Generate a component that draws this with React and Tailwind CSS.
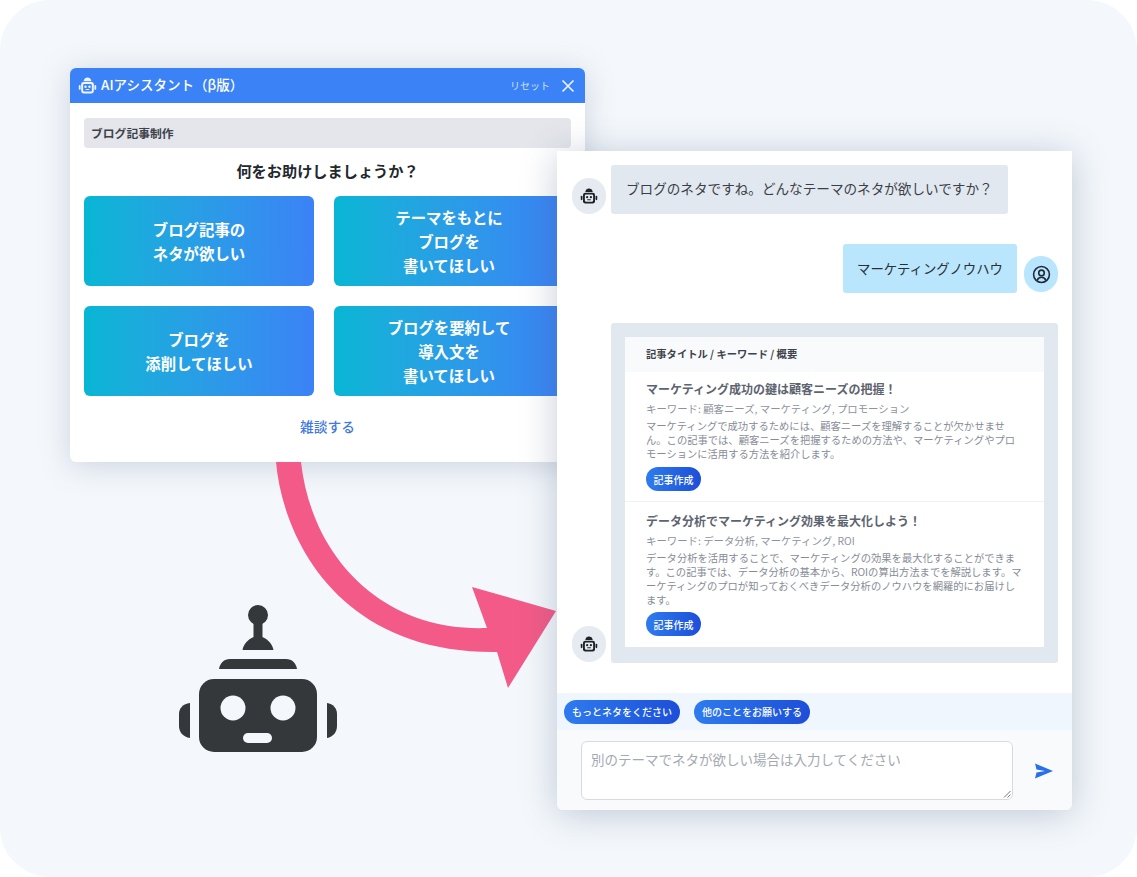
import React from "react";

const font = '"Noto Sans CJK JP", "Noto Sans", sans-serif';

function Robot({ className, fill = "#35383b", eye = "#fff" }) {
  return (
    <svg viewBox="176 603 164 151" className={className} aria-hidden="true">
      <circle cx="258" cy="615" r="10" fill={fill} />
      <path d="M253.500 620h9v17c5 2 10 7 11 13h-31c1-6 6-11 11-13z" fill={fill} />
      <path d="M219 669c1-6 5-10 11-10h56c6 0 10 4 11 10z" fill={fill} />
      <rect x="199" y="679" width="118" height="73" rx="15" fill={fill} />
      <circle cx="233" cy="708" r="12.5" fill={eye} />
      <circle cx="283" cy="708" r="12.5" fill={eye} />
      <rect x="243" y="733" width="29" height="10" rx="5" fill={eye} />
      <path d="M190 703v35c-7-1-11-6-11-12v-12c0-6 4-10 11-11z" fill={fill} />
      <path d="M327 703v35c6-1 10-6 10-12v-12c0-6-4-10-10-11z" fill={fill} />
    </svg>
  );
}

function SmallRobot({ className, fill, face }) {
  return (
    <svg viewBox="0 0 24 24" className={className} aria-hidden="true">
      <path d="M7 6.500C7.500 3.500 9.500 2 12 2s4.500 1.500 5 4.500z" fill={fill} />
      <rect x="4" y="7.500" width="16" height="14.500" rx="3" fill={fill} />
      <rect x="1" y="11.500" width="2.300" height="6" rx="1.100" fill={fill} />
      <rect x="20.700" y="11.500" width="2.300" height="6" rx="1.100" fill={fill} />
      <rect x="6.500" y="10" width="11" height="9.500" rx="1.500" fill={face} />
      <circle cx="9.500" cy="13.500" r="1.500" fill={fill} />
      <circle cx="14.500" cy="13.500" r="1.500" fill={fill} />
      <rect x="9.500" y="16.300" width="5" height="1.500" rx="0.700" fill={fill} />
    </svg>
  );
}

function ActionCard({ lines }) {
  return (
    <div className="h-[90px] rounded-md bg-gradient-to-r from-[#06b6d4] to-[#3b82f6] flex flex-col items-center justify-center text-white text-[15.4px] font-bold leading-[24px] text-center">
      {lines.map((l) => (
        <span key={l}>{l}</span>
      ))}
    </div>
  );
}

function BotAvatar() {
  return (
    <div className="w-[34px] h-[36px] rounded-full bg-[#e5ebf1] flex items-center justify-center shrink-0">
      <SmallRobot className="w-[18px] h-[18px]" fill="#1f2328" face="#e5ebf1" />
    </div>
  );
}

function Chip({ children, className = "" }) {
  return (
    <span className={`inline-flex items-center justify-center h-[24px] rounded-full bg-gradient-to-r from-[#2f7bee] to-[#1d4ed8] text-white text-[10px] font-medium whitespace-nowrap ${className}`}>
      {children}
    </span>
  );
}

function Article({ title, keywords, lines, className, chipClass }) {
  return (
    <div className={`px-[21px] ${className}`}>
      <div className="text-[12px] font-bold leading-[18px] text-[#5d6470] whitespace-nowrap">{title}</div>
      <div className="mt-[4px] text-[10.4px] leading-[14px] text-[#8d939d] whitespace-nowrap">{keywords}</div>
      <div className="mt-[3px] text-[10.3px] leading-[14px] text-[#868c96]">
        {lines.map((l) => (
          <div key={l} className="whitespace-nowrap">{l}</div>
        ))}
      </div>
      <Chip className={`w-[55px] ${chipClass}`}>記事作成</Chip>
    </div>
  );
}

export default function App() {
  return (
    <div className="relative w-[1137px] h-[877px] overflow-hidden bg-white" style={{ fontFamily: font }}>
      <div className="absolute inset-0 rounded-[50px] bg-[#f4f8fc]" />

      {/* Left window */}
      <div className="absolute left-[70px] top-[68px] w-[515px] h-[394px] rounded-md bg-white shadow-[0_4px_30px_rgba(90,105,135,0.25)] overflow-hidden">
        <div className="h-[35px] bg-[#3b82f6] flex items-center pl-[8px] pr-[10px] text-white">
          <SmallRobot className="w-[19px] h-[19px] shrink-0" fill="#eef4ff" face="#3b82f6" />
          <span className="ml-[4px] -mt-[2px] text-[13.5px] font-medium">AIアシスタント（β版）</span>
          <span className="ml-auto text-[10px] text-[#cfe0fc]">リセット</span>
          <svg viewBox="0 0 14 14" className="ml-[11px] w-[14px] h-[14px]" fill="none" stroke="#eaf2ff" strokeWidth="1.7" aria-hidden="true">
            <path d="M1.500 1.500l11 11M12.500 1.500l-11 11" />
          </svg>
        </div>
        <div className="px-[14px] pt-[15px]">
          <div className="h-[30px] rounded-sm bg-[#e4e6eb] flex items-center px-[7px] text-[11.8px] font-bold text-[#3e434b]">
            ブログ記事制作
          </div>
          <div className="mt-[11px] text-center text-[15.2px] leading-[22px] font-bold text-[#23272e]">
            何をお助けしましょうか？
          </div>
          <div className="mt-[15px] grid grid-cols-[230px_230px] gap-x-[20px] gap-y-[20px]">
            <ActionCard lines={["ブログ記事の", "ネタが欲しい"]} />
            <ActionCard lines={["テーマをもとに", "ブログを", "書いてほしい"]} />
            <ActionCard lines={["ブログを", "添削してほしい"]} />
            <ActionCard lines={["ブログを要約して", "導入文を", "書いてほしい"]} />
          </div>
          <div className="mt-[20px] text-center text-[13.7px] leading-[20px] font-medium text-[#3f78e0]">雑談する</div>
        </div>
      </div>

      {/* Curved arrow */}
      <svg viewBox="0 0 1137 877" className="absolute inset-0 w-[1137px] h-[877px]" aria-hidden="true">
        <path
          d="M276 462C283 540 340 654 497 652L508 688L556 611L472 587L487 628C385 632 312 560 301 462Z"
          fill="#f45a87"
        />
      </svg>

      {/* Big robot */}
      <Robot className="absolute left-[176px] top-[603px] w-[164px] h-[151px]" eye="#f4f8fc" />

      {/* Right window */}
      <div className="absolute left-[557px] top-[151px] w-[515px] h-[659px] rounded-b-md bg-white shadow-[0_4px_36px_rgba(80,95,130,0.32)] flex flex-col overflow-hidden">
        <div className="h-[542px] relative">
          <div className="flex items-start pl-[15px] pt-[14px]">
            <div className="mt-[13px]"><BotAvatar /></div>
            <div className="ml-[5px] w-[397px] h-[49px] rounded-[3px] bg-[#e2e8f0] flex items-center pl-[15px] pb-[2px] text-[13.6px] text-[#3a3f47] whitespace-nowrap">
              ブログのネタですね。どんなテーマのネタが欲しいですか？
            </div>
          </div>
          <div className="flex items-start justify-end pr-[14px] mt-[30px]">
            <div className="w-[174px] h-[49px] rounded-[3px] bg-[#bae6fd] flex items-center justify-center pb-[1px] text-[13.4px] text-[#2a2f36] whitespace-nowrap">
              マーケティングノウハウ
            </div>
            <div className="ml-[7px] mt-[12px] w-[34px] h-[36px] rounded-full bg-[#bae6fd] flex items-center justify-center">
              <svg viewBox="0 0 24 24" className="w-[19px] h-[19px]" fill="none" stroke="#1f2937" strokeWidth="2" aria-hidden="true">
                <circle cx="12" cy="12" r="10" />
                <circle cx="12" cy="10" r="3.500" />
                <path d="M6.500 19.500c1-3 3-4 5.500-4s4.500 1 5.500 4" />
              </svg>
            </div>
          </div>
          <div className="flex items-end pl-[15px] pr-[14px] mt-[30px]">
            <BotAvatar />
            <div className="ml-[5px] -mb-[1px] w-[447px] h-[340px] rounded-[3px] bg-[#e2e8f0] p-[14px] pb-[16px]">
              <div className="w-[419px] h-[310px] bg-white">
                <div className="h-[35px] bg-[#f9fafb] flex items-center pb-[2px] px-[21px] text-[10.3px] font-bold text-[#3e434b]">
                  記事タイトル / キーワード / 概要
                </div>
                <Article
                  className="h-[130px] pt-[8px] border-b border-[#f0f1f3]"
                  chipClass="mt-[6px]"
                  title="マーケティング成功の鍵は顧客ニーズの把握！"
                  keywords="キーワード: 顧客ニーズ, マーケティング, プロモーション"
                  lines={[
                    "マーケティングで成功するためには、顧客ニーズを理解することが欠かせませ",
                    "ん。この記事では、顧客ニーズを把握するための方法や、マーケティングやプロ",
                    "モーションに活用する方法を紹介します。",
                  ]}
                />
                <Article
                  className="pt-[10px]"
                  chipClass="mt-[5px]"
                  title="データ分析でマーケティング効果を最大化しよう！"
                  keywords="キーワード: データ分析, マーケティング, ROI"
                  lines={[
                    "データ分析を活用することで、マーケティングの効果を最大化することができま",
                    "す。この記事では、データ分析の基本から、ROIの算出方法までを解説します。マ",
                    "ーケティングのプロが知っておくべきデータ分析のノウハウを網羅的にお届けし",
                    "ます。",
                  ]}
                />
              </div>
            </div>
          </div>
        </div>
        <div className="h-[37px] bg-[#eff6fe] flex items-center pl-[7px] gap-[14px]">
          <Chip className="w-[116px]">もっとネタをください</Chip>
          <Chip className="w-[116px]">他のことをお願いする</Chip>
        </div>
        <div className="flex-1 bg-[#f9fafb] flex items-start pl-[24px] pt-[11px]">
          <div className="relative w-[432px] h-[59px] rounded-md border border-[#d7dbe1] bg-white px-[9px] py-[7px] text-[13.5px] leading-[20px] text-[#a3a9b2] whitespace-nowrap">
            別のテーマでネタが欲しい場合は入力してください
            <svg viewBox="0 0 8 8" className="absolute right-[1px] bottom-[1px] w-[8px] h-[8px]" fill="none" stroke="#777" strokeWidth="1" aria-hidden="true">
              <path d="M1 7.500L7.500 1M4.500 7.500L7.500 4.500" />
            </svg>
          </div>
          <svg viewBox="0 0 18 16" className="ml-[22px] mt-[22px] w-[18px] h-[16px]" fill="#2a6fe8" aria-hidden="true">
            <path d="M0 0.500L18 8L0 15.500L1.500 9.500L10 8L1.500 6.500Z" />
          </svg>
        </div>
      </div>
    </div>
  );
}
